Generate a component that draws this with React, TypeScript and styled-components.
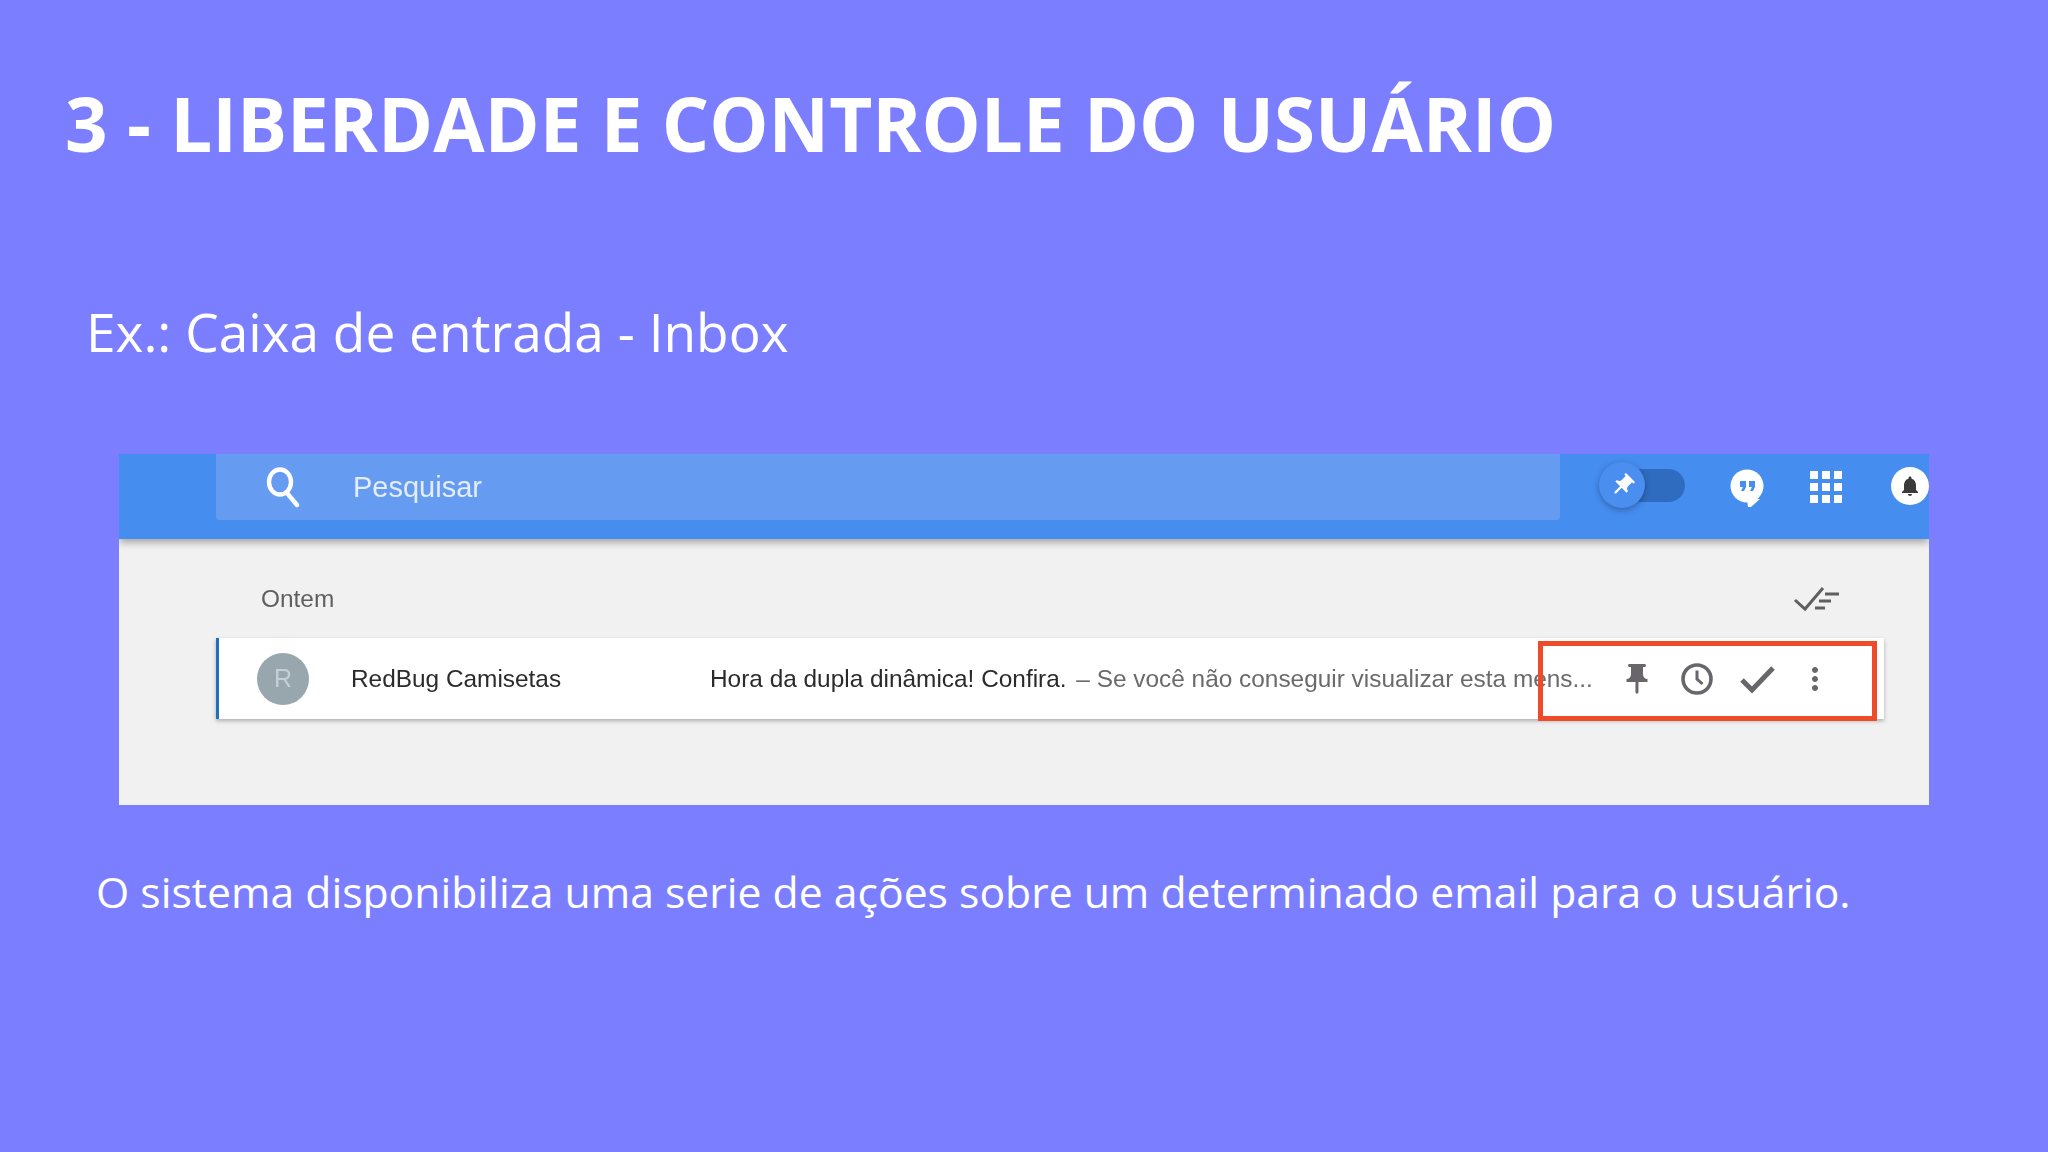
import styled, { createGlobalStyle } from "styled-components";
import { MdApps, MdMoreVert, MdNotifications, MdPushPin } from "react-icons/md";

const Global = createGlobalStyle`
  html, body { margin: 0; padding: 0; }
  body { background: #7b7fff; overflow: hidden; }
`;

const Slide = styled.div`
  width: 2048px;
  height: 1152px;
  background: #7b7fff;
  color: #fff;
  font-family: "Open Sans", sans-serif;
  display: flex;
  flex-direction: column;
`;
const Title = styled.h1`
  margin: 74px 0 0 65px;
  font-size: 74.5px;
  line-height: 98px;
  font-weight: 700;
`;
const Subtitle = styled.p`
  margin: 124px 0 0 86px;
  font-size: 53.2px;
  line-height: 72px;
  font-weight: 400;
`;
const Caption = styled.p`
  margin: 58px 0 0 96px;
  font-size: 42.7px;
  line-height: 58px;
  font-weight: 400;
`;

const Shot = styled.div`
  margin: 86px 0 0 119px;
  width: 1810px;
  height: 351px;
  background: #f2f1f2;
  font-family: "Liberation Sans", sans-serif;
  display: flex;
  flex-direction: column;
  overflow: hidden;
  filter: blur(0.5px);
`;
const Header = styled.header`
  height: 85px;
  flex: none;
  background: #468df0;
  box-shadow: 0 3px 8px rgba(0, 0, 0, 0.35);
  position: relative;
  display: flex;
  align-items: flex-start;
  padding-left: 97px;
`;
const SearchBox = styled.div`
  width: 1344px;
  height: 66px;
  background: #659cf2;
  border-radius: 0 0 4px 4px;
  display: flex;
  align-items: center;
  padding-left: 50px;
  box-sizing: border-box;
  gap: 53px;
  color: #e3edfc;
  font-size: 29px;
`;
const Toggle = styled.div`
  margin: 15px 0 0 39px;
  width: 86px;
  height: 33px;
  position: relative;
  display: flex;
  justify-content: flex-end;
`;
const Track = styled.div`
  width: 66px;
  height: 33px;
  background: #2f6cbf;
  border-radius: 17px;
`;
const Thumb = styled.div`
  position: absolute;
  left: 0;
  top: -7px;
  width: 46px;
  height: 46px;
  border-radius: 50%;
  background: #4a8ff0;
  box-shadow: 0 2px 6px rgba(0, 0, 0, 0.3);
  display: flex;
  align-items: center;
  justify-content: center;
  color: #fff;
  svg { font-size: 27px; transform: rotate(45deg); }
`;
const Bubble = styled.svg`
  width: 34px;
  height: 38px;
  margin: 15px 0 0 45px;
  flex: none;
`;
const Apps = styled.div`
  margin: 9px 0 0 38px;
  color: #fff;
  font-size: 48px;
  line-height: 0;
`;
const Bell = styled.div`
  margin: 13px 0 0 41px;
  flex: none;
  width: 38px;
  height: 38px;
  border-radius: 50%;
  background: #fff;
  color: #3a3a3a;
  display: flex;
  align-items: center;
  justify-content: center;
  svg { font-size: 24px; }
`;

const DayRow = styled.div`
  height: 99px;
  flex: none;
  box-sizing: border-box;
  padding: 20px 89px 0 142px;
  display: flex;
  align-items: center;
  justify-content: space-between;
  color: #5f5f5f;
  font-size: 24.4px;
`;
const Mail = styled.div`
  margin-left: 97px;
  width: 1668px;
  height: 81px;
  flex: none;
  box-sizing: border-box;
  background: #fff;
  border-left: 3px solid #1f6fc4;
  box-shadow: 0 2px 4px rgba(0, 0, 0, 0.28);
  position: relative;
  display: flex;
  align-items: center;
  padding-left: 38px;
  font-size: 24.4px;
  color: #2b2b2b;
  white-space: nowrap;
`;
const Avatar = styled.div`
  width: 52px;
  height: 52px;
  flex: none;
  border-radius: 50%;
  background: #98a7ae;
  color: #c5cfd4;
  display: flex;
  align-items: center;
  justify-content: center;
  font-size: 25px;
`;
const Sender = styled.span`
  margin-left: 42px;
  width: 359px;
  flex: none;
`;
const Snippet = styled.span`
  margin-left: 3px;
  color: #6a6a6a;
`;
const Actions = styled.div`
  margin-left: 26px;
  display: flex;
  align-items: center;
  color: #68666a;
`;
const Action = styled.span<{ $size: number; $gap: number }>`
  display: flex;
  margin-left: ${(p) => p.$gap}px;
  font-size: ${(p) => p.$size}px;
`;
const Highlight = styled.div`
  position: absolute;
  top: 3px;
  right: 7px;
  bottom: -2px;
  width: 339px;
  box-sizing: border-box;
  border: 5px solid #ee4b2b;
`;

export default function App() {
  return (
    <Slide>
      <Global />
      <Title>3 - LIBERDADE E CONTROLE DO USUÁRIO</Title>
      <Subtitle>Ex.: Caixa de entrada - Inbox</Subtitle>
      <Shot>
        <Header>
          <SearchBox>
            <svg width="34" height="42" viewBox="0 0 34 42" fill="none" stroke="#fff" strokeWidth="4.4">
              <ellipse cx="14" cy="16" rx="11" ry="12.5" />
              <path d="M21 27l10 12" strokeLinecap="round" />
            </svg>
            <span>Pesquisar</span>
          </SearchBox>
          <Toggle>
            <Track />
            <Thumb>
              <MdPushPin />
            </Thumb>
          </Toggle>
          <Bubble viewBox="0 0 34 38">
            <circle cx="17" cy="17" r="16.5" fill="#fff" />
            <path d="M17 30h13l-9 8h-3z" fill="#fff" />
            <path d="M10 12h6v6l-2 4h-3l2-4h-3zM19 12h6v6l-2 4h-3l2-4h-3z" fill="#468df0" />
          </Bubble>
          <Apps>
            <MdApps />
          </Apps>
          <Bell>
            <MdNotifications />
          </Bell>
        </Header>
        <DayRow>
          <span>Ontem</span>
          <svg width="46" height="26" viewBox="0 0 46 26" fill="none" stroke="#5f5f5f" strokeWidth="3">
            <path d="M1 14l10 9L29 2" />
            <path d="M31 8h14M25 15h12M21 22h10" />
          </svg>
        </DayRow>
        <Mail>
          <Avatar>R</Avatar>
          <Sender>RedBug Camisetas</Sender>
          <span>Hora da dupla dinâmica! Confira.</span>
          <Snippet>&nbsp;– Se você não conseguir visualizar esta mens...</Snippet>
          <Actions>
            <Action $size={36} $gap={0}>
              <MdPushPin />
            </Action>
            <Action $size={36} $gap={24}>
              <svg width="36" height="36" viewBox="0 0 36 36" fill="none" stroke="currentColor" strokeWidth="3.6">
                <circle cx="18" cy="18" r="14" />
                <path d="M18 9.5V18l5.5 5" strokeWidth="3" />
              </svg>
            </Action>
            <Action $size={44} $gap={20}>
              <svg width="44" height="44" viewBox="0 0 44 44" fill="none" stroke="currentColor" strokeWidth="5">
                <path d="M7 23l10 10L38 11" />
              </svg>
            </Action>
            <Action $size={36} $gap={18}>
              <MdMoreVert />
            </Action>
          </Actions>
          <Highlight />
        </Mail>
      </Shot>
      <Caption>O sistema disponibiliza uma serie de ações sobre um determinado email para o usuário.</Caption>
    </Slide>
  );
}
